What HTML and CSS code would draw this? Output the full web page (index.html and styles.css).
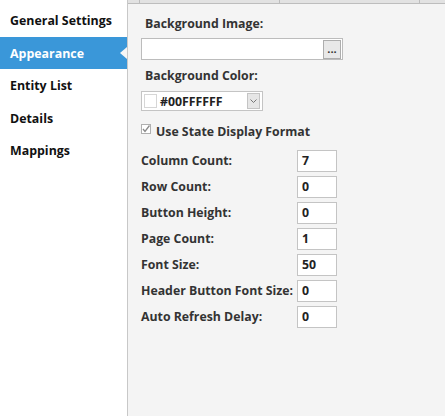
FILE: index.html
```html
<!DOCTYPE html>
<html>
<head>
<meta charset="utf-8">
<link rel="stylesheet" href="styles.css">
</head>
<body>
<div class="app">
  <nav class="sidebar">
    <div class="nav-item">General Settings</div>
    <div class="nav-item active">Appearance</div>
    <div class="nav-item">Entity List</div>
    <div class="nav-item">Details</div>
    <div class="nav-item">Mappings</div>
  </nav>
  <main class="panel">
    <div class="tabstrip">
      <span class="tab tab-a"></span>
      <span class="tab tab-b"></span>
      <span class="tab tab-c"></span>
      <span class="tab tab-d"></span>
    </div>
    <div class="content">
      <div class="field-label first">Background Image:</div>
      <div class="file-input">
        <span class="file-text"></span>
        <span class="browse">...</span>
      </div>
      <div class="field-label second">Background Color:</div>
      <div class="color-select">
        <span class="swatch"></span>
        <span class="color-text">#00FFFFFF</span>
        <span class="drop">
          <svg width="7" height="4" viewBox="0 0 7 4"><path d="M0.5 0.5 L3.5 3.5 L6.5 0.5" fill="none" stroke="#777" stroke-width="1"/></svg>
        </span>
      </div>
      <div class="check-row">
        <span class="checkbox">
          <svg width="8" height="8" viewBox="0 0 8 8"><path d="M1 4 L3 6.5 L7.5 0.5" fill="none" stroke="#8a8a8a" stroke-width="1.3"/></svg>
        </span>
        <span class="check-label">Use State Display Format</span>
      </div>
      <div class="grid">
        <span class="g-label">Column Count:</span><span class="num">7</span>
        <span class="g-label">Row Count:</span><span class="num">0</span>
        <span class="g-label">Button Height:</span><span class="num">0</span>
        <span class="g-label">Page Count:</span><span class="num">1</span>
        <span class="g-label">Font Size:</span><span class="num">50</span>
        <span class="g-label">Header Button Font Size:</span><span class="num">0</span>
        <span class="g-label">Auto Refresh Delay:</span><span class="num">0</span>
      </div>
    </div>
  </main>
</div>
</body>
</html>
```
FILE: styles.css
```css
html, body {
  margin: 0;
  padding: 0;
}
body {
  width: 445px;
  height: 416px;
  overflow: hidden;
  font-family: "Open Sans", "Noto Sans", sans-serif;
  font-weight: 700;
  background: #f4f4f4;
}
.app {
  display: flex;
  height: 416px;
}
.sidebar {
  width: 127px;
  flex: none;
  background: #ffffff;
  border-right: 1px solid #c8c8c8;
  padding-top: 4px;
  box-sizing: content-box;
}
.nav-item {
  position: relative;
  height: 32.5px;
  line-height: 33px;
  padding-left: 10px;
  font-size: 12.4px;
  color: #111;
  white-space: nowrap;
}
.nav-item.active {
  background: #3a97d9;
  color: #fff;
}
.nav-item.active::after {
  content: "";
  position: absolute;
  right: 0;
  top: 50%;
  margin-top: -6px;
  border-style: solid;
  border-width: 6px 7px 6px 0;
  border-color: transparent #f6f6f6 transparent transparent;
}
.panel {
  flex: 1;
  display: flex;
  flex-direction: column;
  background: #f4f4f4;
}
.tabstrip {
  display: flex;
  height: 3px;
  background: #e2e2e2;
  border-bottom: 1px solid #bdbdbd;
}
.tab {
  border-right: 1px solid #bdbdbd;
}
.tab-a { width: 11px; }
.tab-b { width: 139px; }
.tab-c { width: 139px; }
.tab-d { flex: 1; border-right: none; }
.content {
  padding: 12px 0 0 13px;
  color: #333;
  font-size: 12.3px;
}
.field-label {
  height: 16px;
  line-height: 16px;
  padding-left: 4px;
}
.field-label.second {
  margin-top: 8px;
}
.file-input {
  margin-top: 6px;
  width: 200px;
  height: 20px;
  border: 1px solid #bcbcbc;
  background: #fff;
  display: flex;
  justify-content: flex-end;
  align-items: center;
}
.browse {
  margin-right: 1px;
  background: #e8e8e8;
  border: 1px solid #adadad;
  box-sizing: border-box;
  font-size: 11px;
  line-height: 15px;
  text-align: center;
  color: #333;
  width: 18px;
  height: 19px;
}
.color-select {
  margin-top: 7px;
  width: 120px;
  height: 18px;
  border: 1px solid #c4c4c4;
  background: #fff;
  display: flex;
  align-items: center;
}
.swatch {
  width: 11px;
  height: 12px;
  margin-left: 2px;
  border: 1px solid #d6d6d6;
  background: #fff;
}
.color-text {
  margin-left: 3px;
  flex: 1;
  color: #222;
  font-size: 12.3px;
}
.drop {
  width: 11px;
  height: 14px;
  margin-right: 2px;
  background: #e6e6e6;
  border: 1px solid #c4c4c4;
  display: flex;
  align-items: center;
  justify-content: center;
}
.check-row {
  margin-top: 12px;
  height: 16px;
  display: flex;
  align-items: center;
}
.checkbox {
  width: 8px;
  height: 8px;
  border: 1px solid #b0b0b0;
  background: #fff;
  display: flex;
  align-items: center;
  justify-content: center;
  margin-top: -4px;
}
.check-label {
  margin-left: 5px;
}
.grid {
  margin-top: 11px;
  display: grid;
  grid-template-columns: 156px 40px;
  row-gap: 4px;
  align-items: center;
}
.g-label {
  line-height: 16px;
  white-space: nowrap;
}
.num {
  height: 20px;
  line-height: 20px;
  border: 1px solid #c4c4c4;
  background: #fff;
  padding-left: 4px;
  color: #222;
  box-sizing: content-box;
  width: 34px;
}
```
